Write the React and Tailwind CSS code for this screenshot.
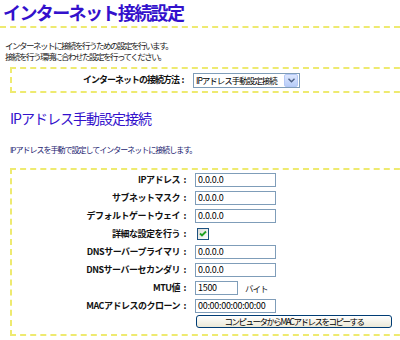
import React from "react";

const rows = [
    { label: "IPアドレス", value: "0.0.0.0" },
    { label: "サブネットマスク", value: "0.0.0.0" },
    { label: "デフォルトゲートウェイ", value: "0.0.0.0" },
    { label: "詳細な設定を行う", check: true },
    { label: "DNSサーバープライマリ", value: "0.0.0.0" },
    { label: "DNSサーバーセカンダリ", value: "0.0.0.0" },
    { label: "MTU値", value: "1500", mtu: true },
    { label: "MACアドレスのクローン", value: "00:00:00:00:00:00" },
];

const TextBox = ({ value, small }) => (
    <div
        className={`flex h-[14px] items-center border border-[#7f9db9] bg-white pl-[2px] text-[9px] tracking-[-0.3px] text-black ${
            small ? "w-[43px]" : "w-[81px]"
        }`}
    >
        {value}
    </div>
);

const CheckBox = () => (
    <div className="flex size-[12px] items-center justify-center border border-[#1c5180] bg-[linear-gradient(135deg,#dcdcd7,#ffffff)]">
        <svg width="8" height="8" viewBox="0 0 8 8">
            <path d="M1 3.5 L3 5.5 L7 1.5" fill="none" stroke="#21a121" strokeWidth="1.8" />
        </svg>
    </div>
);

const App = () => {
    return (
        <div className="h-[340px] w-[400px] overflow-hidden bg-white font-['Noto_Sans_CJK_JP',sans-serif]">
            {/* Title */}
            <h1 className="pl-[3px] pt-[1px] text-[18px] font-bold leading-[23px] tracking-[-1.6px] text-[#3311cc]">
                インターネット接続設定
            </h1>
            <div className="mt-[2px] w-[400px] border-t-2 border-dashed border-[#eeea70]" />

            <p className="mt-[12px] pl-[5px] text-[8.5px] leading-[11px] tracking-[-1.5px] text-[#222]">
                インターネットに接続を行うための設定を行います。
                <br />
                接続を行う環境に合わせた設定を行ってください。
            </p>

            {/* Connection type */}
            <div className="ml-[10px] mt-[5px] flex h-[26px] w-[400px] items-center border-2 border-dashed border-[#eeea70]">
                <span className="w-[167px] text-right text-[9px] font-bold tracking-[-1px] text-[#111]">
                    インターネットの接続方法
                </span>
                <span className="w-[8px] text-center text-[9px] font-bold text-[#111]">:</span>
                <div className="ml-[6px] flex h-[15px] w-[107px] items-center border border-[#7f9db9] bg-white">
                    <span className="flex-1 overflow-hidden whitespace-nowrap pl-[2px] text-[8.5px] tracking-[-1px] text-black">
                        IPアドレス手動設定接続
                    </span>
                    <div className="mr-[1px] flex h-[13px] w-[14px] shrink-0 items-center justify-center rounded-[2px] border border-[#b4c8f6] bg-[linear-gradient(#dbe6fe,#b8cdf8)]">
                        <svg width="7" height="5" viewBox="0 0 7 5">
                            <path d="M0.5 0.8 L3.5 3.8 L6.5 0.8" fill="none" stroke="#4d6185" strokeWidth="1.4" />
                        </svg>
                    </div>
                </div>
            </div>

            {/* Section heading */}
            <h2 className="ml-[10px] mt-[16px] text-[14px] leading-[18px] tracking-[-1px] text-[#3311cc]">
                IPアドレス手動設定接続
            </h2>
            <p className="ml-[10px] mt-[17px] text-[8px] leading-[11px] tracking-[-1px] text-[#1c1c70]">
                IPアドレスを手動で設定してインターネットに接続します。
            </p>

            {/* Manual settings */}
            <div className="ml-[10px] mt-[13px] w-[400px] border-2 border-dashed border-[#eeea70] pb-[6px] pt-[1px]">
                {rows.map((r) => (
                    <div key={r.label} className="flex h-[18px] items-center">
                        <span className="w-[168px] text-right text-[9px] font-bold tracking-[-0.5px] text-[#111]">
                            {r.label}
                        </span>
                        <span className="w-[10px] text-center text-[9px] font-bold text-[#111]">:</span>
                        <div className="ml-[5px] flex items-center">
                            {r.check ? (
                                <div className="ml-[2px]">
                                    <CheckBox />
                                </div>
                            ) : (
                                <TextBox value={r.value} small={r.mtu} />
                            )}
                            {r.mtu && (
                                <span className="ml-[7px] text-[8.5px] tracking-[-1px] text-[#222]">バイト</span>
                            )}
                        </div>
                    </div>
                ))}
                <div className="ml-[184px] flex h-[13px] w-[196px] items-center justify-center rounded-[3px] border border-[#003c74] bg-[linear-gradient(#ffffff,#ece9d8)] text-[8.5px] tracking-[-1.5px] text-black">
                    コンピュータからMACアドレスをコピーする
                </div>
            </div>
        </div>
    );
};

export default App;
